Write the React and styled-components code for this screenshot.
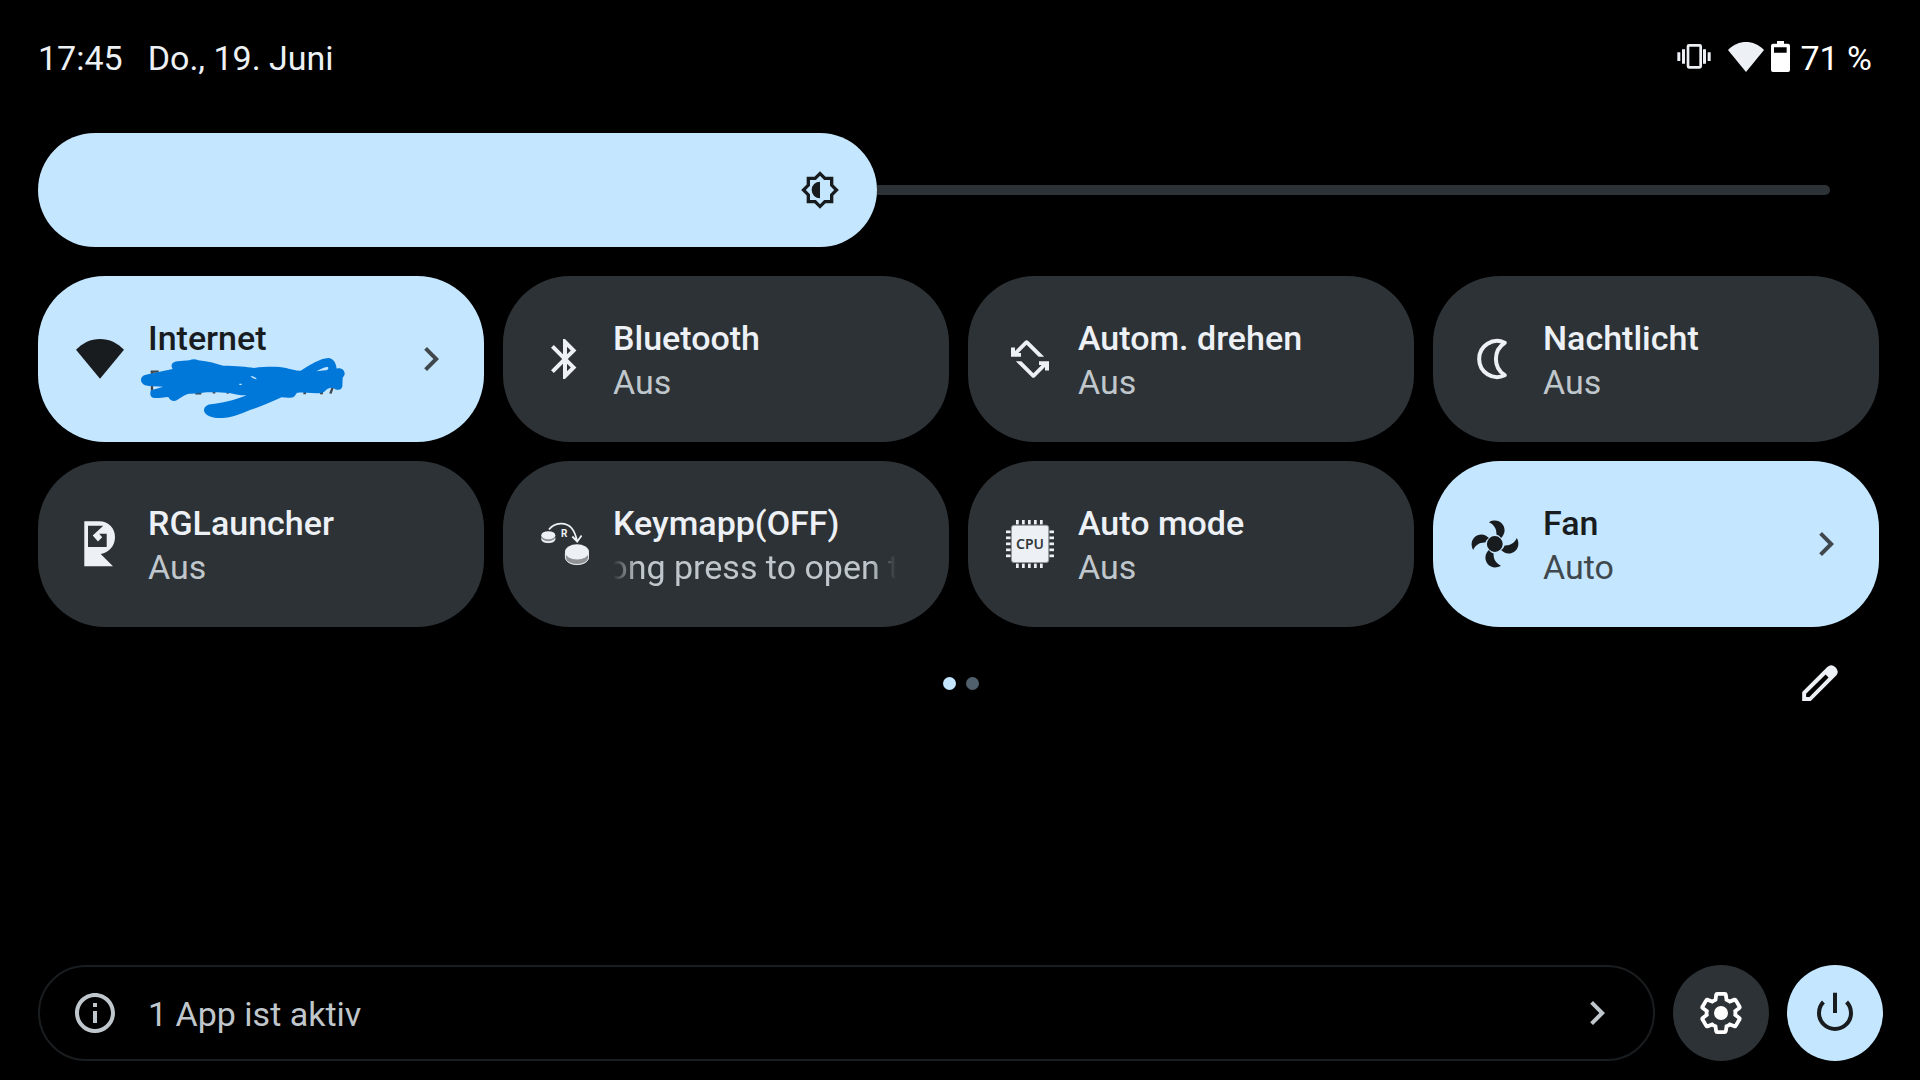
import React from "react";
import styled, { createGlobalStyle } from "styled-components";

const accent = "#c4e6ff";
const surface = "#2c3235";
const light = "#edf1f5";
const muted = "#c0c7cc";
const dark = "#191c1e";
const darkMuted = "#41484d";

const GlobalStyle = createGlobalStyle`
  * {
    box-sizing: border-box;
  }
  body {
    margin: 0;
    background: #000;
    color: ${light};
    font-family: Roboto, "Liberation Sans", sans-serif;
    font-size: 34px;
    line-height: 44px;
  }
  button {
    margin: 0;
    border: none;
    font: inherit;
    cursor: pointer;
  }
  svg {
    display: block;
    flex: none;
  }
`;

const Page = styled.main`
  display: flex;
  flex-direction: column;
  min-height: 100vh;
  padding: 36px 37px 19px 38px;
`;

const Panel = styled.div`
  padding-right: 4px;
`;

const Header = styled.header`
  display: flex;
  align-items: center;
  justify-content: space-between;
  padding-right: 7px;
`;

const Clock = styled.div`
  display: flex;
  gap: 25px;
`;

const Status = styled.div`
  display: flex;
  align-items: center;
  gap: 10px;
  color: #fff;
`;

const StatusIcons = styled.div`
  display: flex;
  align-items: center;
  gap: 7px;
  padding-bottom: 3px;

  svg:first-child {
    margin-right: 10px;
  }
`;

const Slider = styled.label`
  position: relative;
  display: flex;
  align-items: center;
  height: 114px;
  margin-top: 53px;
  padding-right: 49px;
`;

const Fill = styled.span`
  display: flex;
  align-items: center;
  justify-content: flex-end;
  height: 100%;
  padding-right: 37px;
  border-radius: 57px;
  background: ${accent};
  color: ${dark};
`;

const Track = styled.span`
  flex: 1;
  height: 10px;
  border-radius: 0 5px 5px 0;
  background: ${surface};
`;

const Range = styled.input`
  position: absolute;
  inset: 0;
  width: 100%;
  height: 100%;
  margin: 0;
  opacity: 0;
`;

const Tiles = styled.div`
  display: grid;
  grid-template-columns: repeat(4, minmax(0, 1fr));
  gap: 19px;
  margin-top: 29px;
`;

const TileButton = styled.button`
  display: flex;
  align-items: center;
  height: 166px;
  padding: 0 29px 0 38px;
  border-radius: 67px;
  text-align: left;
  background: ${props => (props.$on ? accent : surface)};
  color: ${props => (props.$on ? dark : light)};
`;

const Labels = styled.span`
  flex: 1;
  min-width: 0;
  padding-top: 2px;
  margin: 0 24px;
`;

const Title = styled.span`
  display: block;
  font-weight: 500;
  white-space: nowrap;
`;

const State = styled.span`
  position: relative;
  display: block;
  height: 44px;
  color: ${props => (props.$on ? darkMuted : muted)};
`;

const Marquee = styled.span`
  display: block;
  overflow: hidden;
  white-space: nowrap;
  mask-image: linear-gradient(
    to right,
    transparent,
    #000 24px,
    #000 calc(100% - 24px),
    transparent
  );
`;

const Scribble = styled.svg`
  position: absolute;
  left: -8px;
  top: -3px;
`;

const Arrow = styled.svg`
  color: ${props => (props.$light ? muted : darkMuted)};
`;

const Pager = styled.div`
  display: grid;
  grid-template-columns: 1fr auto 1fr;
  align-items: center;
  margin-top: 32px;
`;

const Dots = styled.div`
  grid-column: 2;
  display: flex;
  gap: 10px;
`;

const Dot = styled.span`
  width: 13px;
  height: 13px;
  border-radius: 50%;
  background: ${props => (props.$current ? accent : "#51606d")};
`;

const Edit = styled.button`
  justify-self: end;
  margin-right: 39px;
  padding: 6px;
  background: none;
  color: ${light};
`;

const Footer = styled.footer`
  display: flex;
  gap: 18px;
  margin-top: auto;
`;

const ActiveApps = styled.button`
  display: flex;
  flex: 1;
  align-items: center;
  gap: 29px;
  height: 96px;
  padding: 0 32px 0 31px;
  border: 2px solid #1a1d1f;
  border-radius: 48px;
  background: none;
  color: ${muted};
  text-align: left;
`;

const Grow = styled.span`
  flex: 1;
  padding-top: 2px;
`;

const Round = styled.button`
  display: grid;
  place-items: center;
  width: 96px;
  height: 96px;
  padding: 0;
  border-radius: 50%;
  background: ${props => (props.$on ? accent : surface)};
  color: ${props => (props.$on ? dark : "#fff")};
`;

const Chevron = ({ light }) => (
  <Arrow $light={light} width="48" height="48" viewBox="0 0 24 24">
    <path
      fill="currentColor"
      d="M10 6 8.59 7.41 13.17 12l-4.58 4.59L10 18l6-6z"
    />
  </Arrow>
);

const Icon = ({ size = 48, box = "0 0 24 24", children }) => (
  <svg width={size} height={size} viewBox={box} fill="currentColor">
    {children}
  </svg>
);

const WifiIcon = () => (
  <Icon>
    <path d="M12 21.9 0 7.4C3.2 4 7.4 2 12 2s8.8 2 12 5.4z" />
  </Icon>
);

const BluetoothIcon = () => (
  <Icon>
    <path d="M17.71 7.71 12 2h-1v7.59L6.41 5 5 6.41 10.59 12 5 17.59 6.41 19 11 14.41V22h1l5.71-5.71-4.3-4.29 4.3-4.29zM13 5.83l1.88 1.88L13 9.59V5.83zm1.88 10.46L13 18.17v-3.76l1.88 1.88z" />
  </Icon>
);

const rotateHalf =
  "M2.5 6.2h2v1.8l5.1-5.1q.7-.6 1.4 0L19.1 10.9H16.3L10.3 4.9 6.2 9H7.5v1.9H2.5z";

const RotateIcon = () => (
  <Icon>
    <path d={rotateHalf} />
    <path d={rotateHalf} transform="rotate(180 12 12)" />
  </Icon>
);

const MoonIcon = () => (
  <Icon>
    <path
      fill="none"
      stroke="currentColor"
      strokeWidth="2"
      strokeLinejoin="round"
      d="M16.9 3.85A9 9 0 1 0 16.9 20.15A9.7 9.7 0 0 1 16.9 3.85z"
    />
  </Icon>
);

const LauncherIcon = () => (
  <Icon box="0 0 48 48">
    <path
      fillRule="evenodd"
      d="M8.3 1.3H23C33 1.3 39 8.5 39 17c0 9-6 15.5-14.3 17L37 46.2H8.3zM12 5.7V27h18.7V13.7h-7.5l3 3.6-4.2 4.2-5.3-6L27.3 5.7z"
    />
  </Icon>
);

const KeymapIcon = () => (
  <Icon box="0 0 48 48">
    <path
      fill="none"
      stroke="currentColor"
      strokeWidth="1.8"
      d="M8 9.5C14 2 25 2 30.500 8c3 3.5 4.5 8 5.5 13M31.3 16.5l4.9 5 4.4-6"
    />
    <path fill="#8e9294" d="M.3 15.5v3.8c0 5.2 14 5.2 14 0v-3.8z" />
    <path d="M.3 17.8c1.5 4.6 12.5 4.6 14 0v1.6c-1.5 4.7-12.5 4.7-14 0z" />
    <ellipse cx="7.3" cy="15.2" rx="7" ry="4" />
    <path fill="#8e9294" d="M24 32v5c0 10.6 24 10.6 24 0v-5z" />
    <path
      fill="none"
      stroke="currentColor"
      d="M24.4 33v4.5c1 9.3 22.2 9.3 23.2 0V33"
    />
    <ellipse cx="36" cy="31.8" rx="12" ry="7.6" />
    <text x="20" y="17.3" fontSize="10" fontWeight="700">
      R
    </text>
  </Icon>
);

const pins = [12, 18, 24, 30, 36];

const CpuIcon = () => (
  <Icon box="0 0 48 48">
    {pins.map(p => (
      <g key={p}>
        <rect x={p - 2} y="0" width="2.7" height="4.4" />
        <rect x={p - 2} y="43.6" width="2.7" height="4.4" />
        <rect x="0" y={p - 1.5} width="4.6" height="2.7" />
        <rect x="43.4" y={p - 1.5} width="4.6" height="2.7" />
      </g>
    ))}
    <rect
      x="5.5"
      y="5.3"
      width="37.2"
      height="37.2"
      rx="2.5"
      stroke="#95999c"
      strokeWidth="1"
    />
    <text
      x="24"
      y="28.8"
      textAnchor="middle"
      fontFamily="'Noto Sans', sans-serif"
      fontSize="14"
      fontWeight="600"
      fill="#33383b"
    >
      CPU
    </text>
  </Icon>
);

const FanIcon = () => (
  <Icon box="0 0 48 48">
    <circle cx="23.8" cy="24" r="7.9" />
    {[0, 90, 180, 270].map(a => (
      <path
        key={a}
        transform={`rotate(${a} 24 24)`}
        d="M18 2.2C20 1 22 .6 24 .6C29.500 .8 33.600 5 33.600 10.500c0 2.8-1.6 5.600-3.500 7.400-1.200-1.800-2.900-3-4.700-3.500C25.800 9 23 4.500 18 2.200z"
      />
    ))}
  </Icon>
);

// blue pen stroke that hides the network name
const HiddenName = () => (
  <Scribble width="207" height="63" viewBox="330 261 621 189">
    <path
      fill="none"
      stroke={darkMuted}
      strokeWidth="7"
      d="M362 305h24M366 302v66M496 370h18M548 367h8M590 368h6M648 373h10M820 369h8M870 369h9M909 350l-8 21"
    />
    <path
      fill="#0078d9"
      d="M345 315C370 310 400 302 428 297C420 285 428 275 442 274L478 271Q492 265 505 271C535 273 560 282 580 287C620 287 650 290 672 294C720 288 750 291 768 294C785 298 800 303 812 302C840 285 870 265 895 264C910 265 918 278 920 296C932 292 945 300 944 312C943 318 938 322 938 325L937 350C932 362 920 362 910 354C900 352 890 357 882 366C870 372 850 369 830 368C815 367 800 366 798 372C793 382 788 384 775 383L755 382C720 398 690 410 660 420C630 432 600 445 575 444C550 445 525 438 522 422C522 405 538 402 555 401C590 398 625 385 650 376C640 376 625 376 615 373C590 366 560 368 530 367C510 370 490 372 478 371C465 372 450 385 440 391C430 396 418 390 415 381C400 382 385 385 372 384C360 382 358 368 364 361C372 357 385 355 400 350C380 349 360 350 345 346C330 340 328 320 345 315z"
    />
    <path
      fill={accent}
      d="M858 304C870 299 884 289 894 291C897 297 893 301 885 301zM661 318Q674 318 681 328Q668 328 661 318zM628 341h7v4h-7z"
    />
  </Scribble>
);

const tiles = [
  { title: "Internet", icon: WifiIcon, on: true, arrow: true, hidden: true },
  { title: "Bluetooth", state: "Aus", icon: BluetoothIcon },
  { title: "Autom. drehen", state: "Aus", icon: RotateIcon },
  { title: "Nachtlicht", state: "Aus", icon: MoonIcon },
  { title: "RGLauncher", state: "Aus", icon: LauncherIcon },
  {
    title: "Keymapp(OFF)",
    state: "Long press to open the app",
    icon: KeymapIcon,
    scroll: 23
  },
  { title: "Auto mode", state: "Aus", icon: CpuIcon },
  { title: "Fan", state: "Auto", icon: FanIcon, on: true, arrow: true }
];

const Tile = ({ tile, on, onClick }) => (
  <TileButton $on={on} aria-pressed={on} onClick={onClick}>
    <tile.icon />
    <Labels>
      <Title>{tile.title}</Title>
      <State $on={on}>
        {tile.scroll ? (
          <Marquee style={{ textIndent: -tile.scroll }}>{tile.state}</Marquee>
        ) : (
          tile.state
        )}
        {tile.hidden && <HiddenName />}
      </State>
    </Labels>
    {tile.arrow && <Chevron />}
  </TileButton>
);

export default class App extends React.Component {
  state = {
    brightness: 468,
    on: tiles.map(t => !!t.on)
  };

  toggle = i => {
    this.setState({ on: this.state.on.map((v, n) => (n === i ? !v : v)) });
  };

  render() {
    const { brightness, on } = this.state;
    return (
      <Page>
        <GlobalStyle />
        <Panel>
          <Header>
            <Clock>
              <span>17:45</span>
              <span>Do., 19. Juni</span>
            </Clock>
            <Status>
              <StatusIcons>
                <svg width="34" height="25" viewBox="112 75 102 75" fill={light}>
                  <rect
                    x="145"
                    y="79"
                    width="38"
                    height="66"
                    rx="3"
                    fill="none"
                    stroke={light}
                    strokeWidth="8"
                  />
                  <path d="M127 91h9v43h-9zM113 100h9v26h-9zM190 91h9v43h-9zM204 100h9v26h-9z" />
                </svg>
                <svg width="36" height="30" viewBox="264 66 108 90" fill={light}>
                  <path d="M318 156L264 90C280 74 299 66 318 66S356 74 372 90z" />
                </svg>
                <svg width="19" height="31" viewBox="393 63 57 93" fill="#fff">
                  <path
                    fillRule="evenodd"
                    d="M411 63h21v8h12q6 0 6 6v73q0 6-6 6h-45q-6 0-6-6V77q0-6 6-6h12zM402 82v16h38V82z"
                  />
                </svg>
              </StatusIcons>
              <span>71 %</span>
            </Status>
          </Header>

          <Slider>
            <Fill style={{ width: `${brightness / 10}%` }}>
              <Icon size={40}>
                <path d="M20 8.69V4h-4.69L12 .69 8.69 4H4v4.69L.69 12 4 15.31V20h4.69L12 23.31 15.31 20H20v-4.69L23.31 12 20 8.69zm-2 5.79V18h-3.52L12 20.48 9.52 18H6v-3.52L3.52 12 6 9.52V6h3.52L12 3.52 14.48 6H18v3.52L20.48 12 18 14.48zM12 7a5 5 0 0 0 0 10z" />
              </Icon>
            </Fill>
            <Track />
            <Range
              type="range"
              aria-label="Helligkeit"
              min="0"
              max="1000"
              value={brightness}
              onChange={e => this.setState({ brightness: +e.target.value })}
            />
          </Slider>

          <Tiles>
            {tiles.map((tile, i) => (
              <Tile
                key={tile.title}
                tile={tile}
                on={on[i]}
                onClick={() => this.toggle(i)}
              />
            ))}
          </Tiles>
        </Panel>

        <Pager>
          <Dots>
            <Dot $current />
            <Dot />
          </Dots>
          <Edit aria-label="Bearbeiten">
            <Icon size={36} box="1146 632 108 109">
              <path
                fillRule="evenodd"
                d="M1146 741V714L1222 638Q1234 627 1246 638Q1260 651 1249 664L1172 741zM1158 729H1168L1226 670L1217 661L1158 719z"
              />
            </Icon>
          </Edit>
        </Pager>

        <Footer>
          <ActiveApps>
            <Icon>
              <path d="M11 7h2v2h-2zm0 4h2v6h-2zm1-9C6.48 2 2 6.48 2 12s4.48 10 10 10 10-4.48 10-10S17.52 2 12 2zm0 18c-4.41 0-8-3.59-8-8s3.59-8 8-8 8 3.59 8 8-3.59 8-8 8z" />
            </Icon>
            <Grow>1 App ist aktiv</Grow>
            <Chevron light />
          </ActiveApps>
          <Round aria-label="Einstellungen">
            <Icon>
              <path
                fill="none"
                stroke="currentColor"
                strokeWidth="1.9"
                d="M19.14 12.94c.04-.3.06-.61.06-.94 0-.32-.02-.64-.07-.94l2.03-1.58c.18-.14.23-.41.12-.61l-1.92-3.32c-.12-.22-.37-.29-.59-.22l-2.39.96c-.5-.38-1.03-.7-1.62-.94l-.36-2.54c-.04-.24-.24-.41-.48-.41h-3.84c-.24 0-.43.17-.47.41l-.36 2.54c-.59.24-1.13.57-1.62.94l-2.39-.96c-.22-.08-.47 0-.59.22L2.74 8.87c-.12.21-.08.47.12.61l2.03 1.58c-.05.3-.09.63-.09.94s.02.64.07.94l-2.03 1.58c-.18.14-.23.41-.12.61l1.92 3.32c.12.22.37.29.59.22l2.39-.96c.5.38 1.03.7 1.62.94l.36 2.54c.05.24.24.41.48.41h3.84c.24 0 .44-.17.47-.41l.36-2.54c.59-.24 1.13-.56 1.62-.94l2.39.96c.22.08.47 0 .59-.22l1.92-3.32c.12-.22.07-.47-.12-.61z"
              />
              <circle cx="12" cy="12" r="3.5" />
            </Icon>
          </Round>
          <Round $on aria-label="Ein/Aus">
            <Icon>
              <path
                fill="none"
                stroke="currentColor"
                strokeWidth="2"
                d="M12 1.9V12M6.2 6.5A8 8 0 1 0 17.8 6.5"
              />
            </Icon>
          </Round>
        </Footer>
      </Page>
    );
  }
}
